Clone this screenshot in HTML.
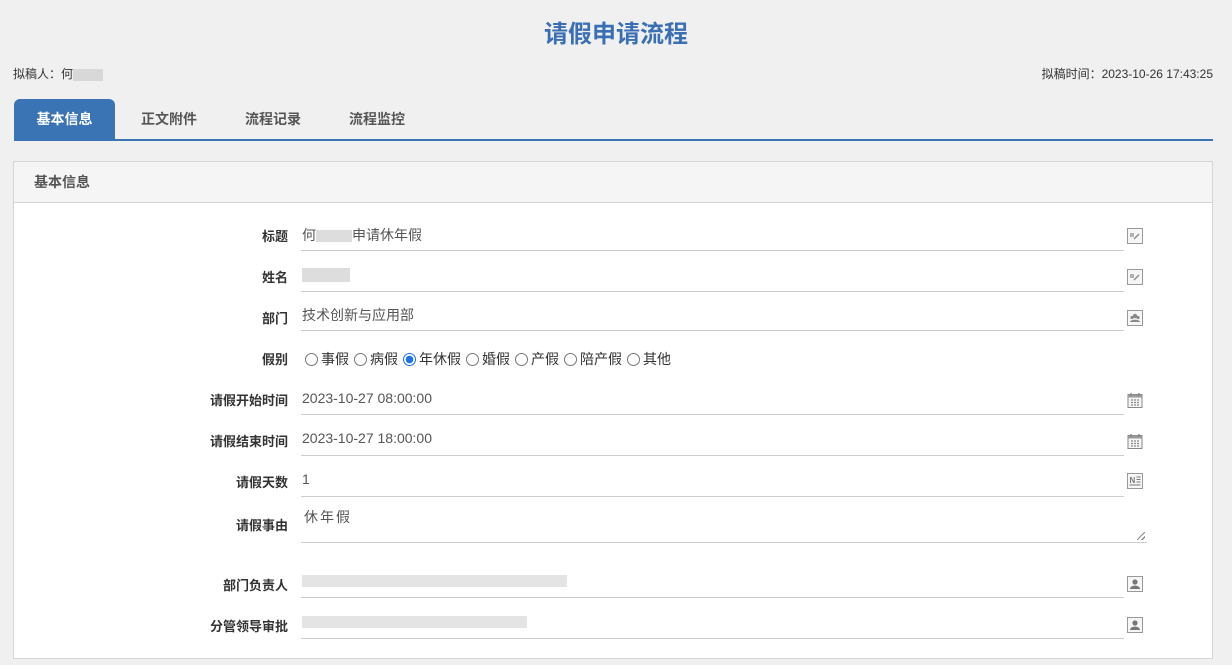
<!DOCTYPE html>
<html><head><meta charset="utf-8"><style>
*{margin:0;padding:0;box-sizing:border-box}
body{width:1232px;height:665px;background:#f0f0f0;font-family:"Liberation Sans","Noto Sans CJK SC",sans-serif;position:relative;overflow:hidden;color:#333}
.title{position:absolute;top:14px;left:0;width:100%;text-align:center;font-size:24px;font-weight:bold;color:#3a6fb3}
.sm{position:absolute;top:65px;font-size:12px;color:#333}
.tab{position:absolute;top:99px;height:40px;line-height:40px;font-size:14px;font-weight:bold;color:#555;text-align:center}
.tab.act{background:#3b74b4;color:#fff;border-radius:6px 6px 0 0}
.bar{position:absolute;left:14px;top:139px;width:1199px;height:2px;background:#3b74b4}
.panel{position:absolute;left:13px;top:161px;width:1200px;height:498px;background:#fff;border:1px solid #d5d5d5}
.ph{height:41px;background:#f5f5f5;border-bottom:1px solid #d5d5d5;line-height:40px;padding-left:20px;font-size:14px;font-weight:bold;color:#555}
.lab{position:absolute;right:924px;font-size:13px;font-weight:bold;color:#333;white-space:nowrap}
.inp{position:absolute;left:287px;width:823px;border-bottom:1px solid #ccc;font-size:14px;color:#555;padding-left:1px}
.ic{position:absolute;left:1113px;width:16px;height:16px}
.blur{display:inline-block;height:12px;background:#ddd;vertical-align:middle}
.rad{display:inline-block;width:13px;height:13px;border:1px solid #777;border-radius:50%;vertical-align:-2px;margin:0 3px 0 5px}
.rad.on{border-color:#1a73e8;background:radial-gradient(circle,#1a73e8 3.5px,#fff 4px)}
</style></head><body>
<svg width="0" height="0" style="position:absolute"><defs>
<symbol id="ed" viewBox="0 0 16 16"><rect x="0.5" y="0.5" width="15" height="15" fill="#f6f6f6" stroke="#999"/><path d="M3 6h4M3 8h4M7 11l5-5" stroke="#888" stroke-width="1.3" fill="none"/></symbol>
<symbol id="gr" viewBox="0 0 16 16"><rect x="0.5" y="0.5" width="15" height="15" fill="#f6f6f6" stroke="#999"/><circle cx="8" cy="6" r="2.2" fill="#888"/><circle cx="5" cy="7.5" r="1.6" fill="#888"/><circle cx="11" cy="7.5" r="1.6" fill="#888"/><path d="M3 12c0-3 10-3 10 0z" fill="#888"/></symbol>
<symbol id="ca" viewBox="0 0 16 16"><rect x="1" y="2.5" width="14" height="13" fill="#f6f6f6" stroke="#888"/><rect x="1" y="2.5" width="14" height="3" fill="#999"/><path d="M4 1v3M12 1v3" stroke="#888" stroke-width="1.5"/><path d="M4 8h2M7 8h2M10 8h2M4 10.5h2M7 10.5h2M10 10.5h2M4 13h2M7 13h2M10 13h2" stroke="#888" stroke-width="1.2"/></symbol>
<symbol id="nu" viewBox="0 0 16 16"><rect x="0.5" y="0.5" width="15" height="15" fill="#f6f6f6" stroke="#999"/><text x="2.5" y="10" font-size="8" font-weight="bold" fill="#777" font-family="Liberation Sans">N</text><path d="M9.5 4h4M9.5 6.5h4M9.5 9h4M2.5 12h11" stroke="#777" stroke-width="1.1"/></symbol>
<symbol id="us" viewBox="0 0 16 16"><rect x="0.5" y="0.5" width="15" height="15" fill="#f6f6f6" stroke="#999"/><circle cx="8" cy="6" r="2.6" fill="#777"/><path d="M3 13c0-4.5 10-4.5 10 0z" fill="#777"/></symbol>
</defs></svg>
<div class="title">请假申请流程</div>
<div class="sm" style="left:13px">拟稿人：何<span class="blur" style="width:30px;background:#d8d8d8"></span></div>
<div class="sm" style="right:19px">拟稿时间：2023-10-26 17:43:25</div>
<div class="tab act" style="left:14px;width:101px">基本信息</div>
<div class="tab" style="left:120px;width:98px">正文附件</div>
<div class="tab" style="left:224px;width:98px">流程记录</div>
<div class="tab" style="left:328px;width:98px">流程监控</div>
<div class="bar"></div>
<div class="panel">
<div class="lab" style="top:64px">标题</div>
<div class="ph">基本信息</div>
<div class="inp" style="top:63px;height:26px">何<span class="blur" style="width:36px"></span>申请休年假</div>
<svg class="ic" style="top:66px"><use href="#ed"/></svg>
<div class="lab" style="top:105px">姓名</div>
<div class="inp" style="top:104px;height:26px"><span class="blur" style="width:48px;height:14px"></span></div>
<svg class="ic" style="top:107px"><use href="#ed"/></svg>
<div class="lab" style="top:146px">部门</div>
<div class="inp" style="top:143px;height:26px">技术创新与应用部</div>
<svg class="ic" style="top:148px"><use href="#gr"/></svg>
<div class="lab" style="top:187px">假别</div>
<div style="position:absolute;left:286px;top:187px;font-size:14px;color:#333"><span class="rad"></span>事假<span class="rad"></span>病假<span class="rad on"></span>年休假<span class="rad"></span>婚假<span class="rad"></span>产假<span class="rad"></span>陪产假<span class="rad"></span>其他</div>
<div class="lab" style="top:228px">请假开始时间</div>
<div class="inp" style="top:228px;height:25px">2023-10-27 08:00:00</div>
<svg class="ic" style="top:230px"><use href="#ca"/></svg>
<div class="lab" style="top:269px">请假结束时间</div>
<div class="inp" style="top:268px;height:26px">2023-10-27 18:00:00</div>
<svg class="ic" style="top:271px"><use href="#ca"/></svg>
<div class="lab" style="top:310px">请假天数</div>
<div class="inp" style="top:309px;height:26px">1</div>
<svg class="ic" style="top:311px"><use href="#nu"/></svg>
<div class="lab" style="top:353px">请假事由</div>
<div class="inp" style="top:345px;height:36px;width:846px;padding-left:3px;letter-spacing:2px">休年假<span style="position:absolute;right:2px;bottom:2px;width:8px;height:8px;background:linear-gradient(135deg,transparent 45%,#888 45%,#888 55%,transparent 55%,transparent 75%,#888 75%,#888 85%,transparent 85%)"></span></div>
<div class="lab" style="top:413px">部门负责人</div>
<div class="inp" style="top:410px;height:26px"><span class="blur" style="width:265px;background:#e4e4e4"></span></div>
<svg class="ic" style="top:414px"><use href="#us"/></svg>
<div class="lab" style="top:454px">分管领导审批</div>
<div class="inp" style="top:451px;height:26px"><span class="blur" style="width:225px;background:#e4e4e4"></span></div>
<svg class="ic" style="top:455px"><use href="#us"/></svg>
</div>
</body></html>
